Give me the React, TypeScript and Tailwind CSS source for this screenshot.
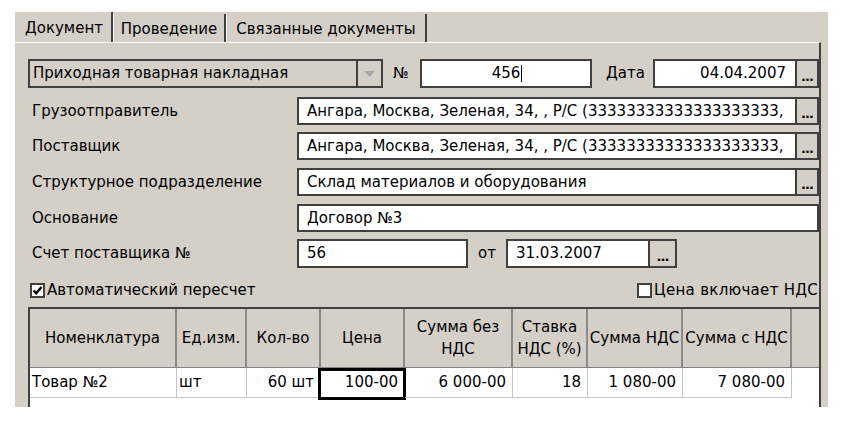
import React from "react";

const font = "font-['DejaVu_Sans',sans-serif]";

interface Col {
  title: string[];
  width: string;
  value: string;
  align: "left" | "right";
  focus?: boolean;
}

const cols: Col[] = [
  { title: ["Номенклатура"], width: "w-[147px]", value: "Товар №2", align: "left" },
  { title: ["Ед.изм."], width: "w-[70px]", value: "шт", align: "left" },
  { title: ["Кол-во"], width: "w-[74px]", value: "60 шт", align: "right" },
  { title: ["Цена"], width: "w-[84px]", value: "100-00", align: "right", focus: true },
  { title: ["Сумма без", "НДС"], width: "w-[108px]", value: "6 000-00", align: "right" },
  { title: ["Ставка", "НДС (%)"], width: "w-[75px]", value: "18", align: "right" },
  { title: ["Сумма НДС"], width: "w-[95px]", value: "1 080-00", align: "right" },
  { title: ["Сумма с НДС"], width: "w-[109px]", value: "7 080-00", align: "right" },
];

const DotsButton: React.FC<{ className?: string }> = ({ className = "" }) => (
  <div
    className={`flex h-full w-[22px] items-end justify-center border-2 border-l-0 border-[#404040] bg-[#d4d0c8] pb-[3px] text-[13px] font-bold leading-none tracking-[-1px] text-black ${className}`}
  >
    ...
  </div>
);

const Field: React.FC<{ text: string; className?: string; align?: string; caret?: boolean }> = ({
  text,
  className = "",
  align = "justify-start pl-[8px]",
  caret,
}) => (
  <div
    className={`flex h-full items-center overflow-hidden whitespace-nowrap border-2 border-[#404040] bg-white text-black ${align} ${className}`}
  >
    {text}
    {caret && <span className="ml-[1px] h-[17px] w-px bg-black" />}
  </div>
);

const Label: React.FC<{ text: string }> = ({ text }) => (
  <div className="w-[269px] shrink-0 pl-[4px] text-black">{text}</div>
);

const Check: React.FC<{ checked?: boolean }> = ({ checked }) => (
  <div className="flex h-[15px] w-[15px] shrink-0 items-center justify-center border-2 border-[#404040] bg-white">
    {checked && (
      <svg width="11" height="11" viewBox="0 0 11 11">
        <path d="M1.5 5.5 L4.2 8.3 L9.5 2" fill="none" stroke="#000" strokeWidth="2.4" />
      </svg>
    )}
  </div>
);

const App: React.FC = () => {
  return (
    <div className={`h-[422px] w-[855px] overflow-hidden bg-white ${font} text-[15px]`}>
      <div className="ml-[15px] mt-[12px] flex h-[395px] w-[813px] flex-col bg-[#d4d0c8]">
        {/* Tabs */}
        <div className="flex h-[30px] items-end pl-[2px]">
          <div className="flex h-[30px] w-[96px] items-center justify-center border-r-2 border-[#404040] pt-[2px] text-black">
            Документ
          </div>
          <div className="flex h-[28px] w-[113px] items-center justify-center border-l border-r-2 border-l-white border-r-[#404040] pt-[2px] text-black">
            Проведение
          </div>
          <div className="flex h-[28px] w-[201px] items-center justify-center border-l border-r-2 border-l-white border-r-[#404040] pt-[2px] text-black">
            Связанные документы
          </div>
        </div>

        {/* Content panel */}
        <div className="mr-[7px] flex flex-1 flex-col border-r-2 border-t border-r-[#404040] border-t-white pl-[13px] pt-[16px]">
          {/* Row 1 */}
          <div className="flex h-[29px] items-center">
            <div className="flex h-full w-[355px] border-2 border-[#404040] bg-[#d4d0c8]">
              <div className="flex flex-1 items-center pl-[3px] text-black">Приходная товарная накладная</div>
              <div className="flex w-[25px] items-center justify-center border-l-2 border-[#404040]">
                <svg width="11" height="6" viewBox="0 0 11 6">
                  <path d="M0 0 H11 L5.5 6 Z" fill="#a8a8a8" />
                </svg>
              </div>
            </div>
            <div className="w-[37px] pl-[10px] text-black">№</div>
            <Field text="456" className="w-[172px]" align="justify-center pl-[2px]" caret />
            <div className="w-[61px] pl-[14px] text-black">Дата</div>
            <Field text="04.04.2007" className="w-[144px]" align="justify-end pr-[9px]" />
            <DotsButton />
          </div>

          {/* Row 2 */}
          <div className="mt-[9px] flex h-[28px] items-center">
            <Label text="Грузоотправитель" />
            <Field text="Ангара, Москва, Зеленая, 34, , Р/С (33333333333333333333," className="w-[500px]" />
            <DotsButton />
          </div>

          {/* Row 3 */}
          <div className="mt-[7px] flex h-[28px] items-center">
            <Label text="Поставщик" />
            <Field text="Ангара, Москва, Зеленая, 34, , Р/С (33333333333333333333," className="w-[500px]" />
            <DotsButton />
          </div>

          {/* Row 4 */}
          <div className="mt-[8px] flex h-[28px] items-center">
            <Label text="Структурное подразделение" />
            <Field text="Склад материалов и оборудования" className="w-[500px]" />
            <DotsButton />
          </div>

          {/* Row 5 */}
          <div className="mt-[8px] flex h-[28px] items-center">
            <Label text="Основание" />
            <Field text="Договор №3" className="w-[522px]" />
          </div>

          {/* Row 6 */}
          <div className="mt-[7px] flex h-[29px] items-center">
            <Label text="Счет поставщика №" />
            <Field text="56" className="w-[171px]" />
            <div className="w-[38px] pl-[10px] text-black">от</div>
            <Field text="31.03.2007" className="w-[144px]" />
            <DotsButton className="w-[27px]" />
          </div>

          {/* Checkboxes */}
          <div className="mt-[15px] flex h-[15px] items-center pl-[2px]">
            <div className="flex items-center gap-[2px] text-black">
              <Check checked />
              <span>Автоматический пересчет</span>
            </div>
            <div className="ml-auto flex w-[182px] items-center gap-[2px] overflow-hidden whitespace-nowrap text-black">
              <Check />
              <span className="tracking-[0.3px]">Цена включает НДС</span>
            </div>
          </div>

          {/* Table */}
          <div className="mt-[9px] flex-1 border-l-2 border-t-2 border-[#404040] bg-white">
            <div className="flex h-[59px] border-b border-[#808080] bg-[#d4d0c8]">
              {cols.map((c, i) => (
                <div
                  key={i}
                  className={`${c.width} flex flex-col items-center justify-center border-r-2 border-[#8a8a8a] text-center leading-[22px] text-black`}
                >
                  {c.title.map((t, j) => (
                    <span key={j} className="whitespace-nowrap">{t}</span>
                  ))}
                </div>
              ))}
              <div className="flex-1" />
            </div>
            <div className="flex h-[30px]">
              {cols.map((c, i) => (
                <div
                  key={i}
                  className={`${c.width} relative flex items-center whitespace-nowrap border-b border-r border-[#c4c4c4] text-black ${
                    c.align === "right" ? "justify-end pr-[6px]" : "justify-start pl-[2px]"
                  }`}
                >
                  {c.focus && (
                    <div className="absolute -left-[3px] top-0 h-[32px] w-[88px] border-[3px] border-black" />
                  )}
                  {c.value}
                </div>
              ))}
            </div>
          </div>
        </div>
      </div>
    </div>
  );
};

export default App;
